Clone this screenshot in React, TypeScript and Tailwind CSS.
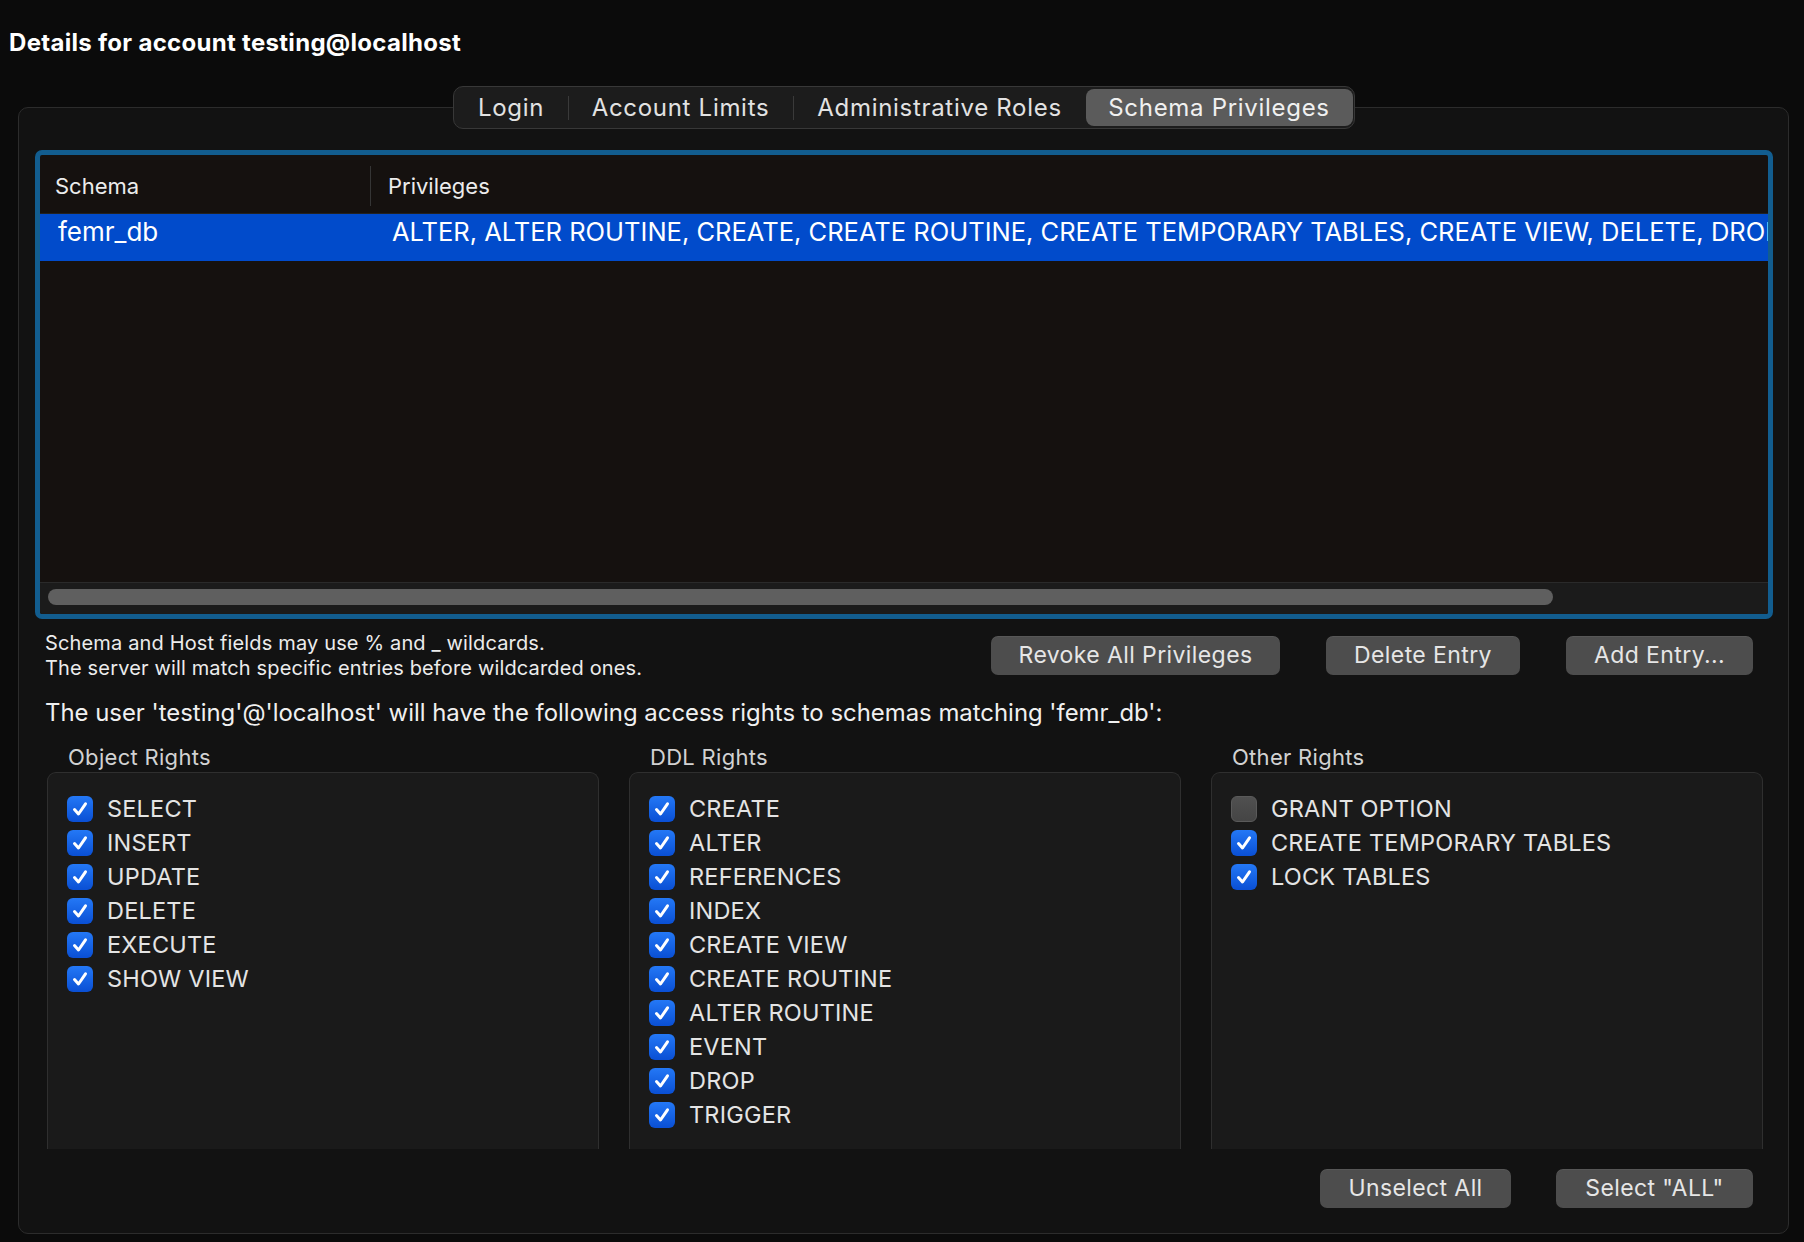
import React from "react";

const FONT = { fontFamily: "Inter, 'Noto Sans', 'Liberation Sans', sans-serif" };

function Check({ checked, label }: { checked: boolean; label: string }) {
  return (
    <div className="flex items-center h-[34px]">
      {checked ? (
        <div className="w-[26px] h-[26px] rounded-[6px] bg-gradient-to-b from-[#2478f6] to-[#0a4fd4] flex items-center justify-center">
          <svg width="18" height="18" viewBox="0 0 18 18">
            <path d="M3.5 9.5 L7.5 14 L14.5 3.8" fill="none" stroke="#ffffff" strokeWidth="3" strokeLinecap="round" strokeLinejoin="round" />
          </svg>
        </div>
      ) : (
        <div className="w-[26px] h-[26px] rounded-[6px] bg-gradient-to-b from-[#505050] to-[#454545] border border-[#5a5a5a]" />
      )}
      <span className="ml-[14px] text-[23.5px] tracking-[0.2px] leading-none text-[#e4e4e4]">{label}</span>
    </div>
  );
}

function Group({ title, items }: { title: string; items: [string, boolean][] }) {
  return (
    <div className="flex flex-col w-[552px]">
      <div className="h-[30px] pl-[21px] text-[22px] tracking-[0.3px] leading-[30px] text-[#d2d2d2]">{title}</div>
      <div className="h-[377px] rounded-t-[9px] border-t border-l border-r border-[#2f2f2f] bg-[#1a1a1a] pt-[19px] pl-[19px]">
        {items.map(([l, c]) => (
          <Check key={l} label={l} checked={c} />
        ))}
      </div>
    </div>
  );
}

function Btn({ label, w }: { label: string; w: string }) {
  return (
    <div className={`${w} h-[39px] rounded-[7px] bg-[#4d4d4d] flex items-center justify-center text-[23px] tracking-[0.4px] text-[#e6e6e6] shadow-[0_1px_0_rgba(255,255,255,0.06)_inset]`}>
      {label}
    </div>
  );
}

export default function App() {
  const privs =
    "ALTER, ALTER ROUTINE, CREATE, CREATE ROUTINE, CREATE TEMPORARY TABLES, CREATE VIEW, DELETE, DROP, EVENT, EXECUTE, INDEX, INSERT, LOCK TABLES, REFERENCES, SELECT, SHOW VIEW, TRIGGER, UPDATE";
  return (
    <div style={FONT} className="w-[1804px] h-[1242px] bg-[#0b0b0b] overflow-hidden flex flex-col">
      <div className="h-[86px] pt-[29px] pl-[9px] text-[24px] tracking-[0.3px] leading-[28px] font-bold text-white">
        Details for account testing@localhost
      </div>
      <div className="pl-[18px] pr-[15px] flex flex-col">
        <div className="relative z-10 flex justify-center">
          <div className="h-[43px] flex items-center rounded-[10px] border border-[#383838] bg-[#1c1c1c] px-[1px] text-[24px] tracking-[0.7px] text-[#e2e2e2]">
            <div className="w-[113px] h-[37px] flex items-center justify-center">Login</div>
            <div className="w-px h-[24px] bg-[#3a3a3a]" />
            <div className="w-[224px] h-[37px] flex items-center justify-center">Account Limits</div>
            <div className="w-px h-[24px] bg-[#3a3a3a]" />
            <div className="w-[292px] h-[37px] flex items-center justify-center">Administrative Roles</div>
            <div className="w-[267px] h-[37px] flex items-center justify-center rounded-[8px] bg-[#5b5b5b] text-[#f0f0f0]">
              Schema Privileges
            </div>
          </div>
        </div>
        <div className="-mt-[22px] h-[1127px] rounded-[10px] border border-[#2c2c2c] bg-[#121212] pt-[42px] pl-[16px] pr-[15px] flex flex-col">
          <div className="h-[469px] rounded-[7px] border-[5px] border-[#125d8f] bg-[#15110f] flex flex-col overflow-hidden">
            <div className="h-[58px] pt-[4px] flex items-center text-[22px] text-[#ececec] shrink-0">
              <div className="w-[330px] pl-[15px]">Schema</div>
              <div className="w-px h-[40px] bg-[#353535]" />
              <div className="pl-[17px]">Privileges</div>
            </div>
            <div className="h-px bg-[#222] shrink-0" />
            <div className="h-[47px] bg-[#014bcb] flex items-start pt-[3px] leading-[30px] text-white whitespace-nowrap overflow-hidden shrink-0">
              <div className="w-[331px] pl-[18px] shrink-0 text-[26px]">femr_db</div>
              <div className="pl-[21px] text-[25.5px]">{privs}</div>
            </div>
            <div className="flex-1" />
            <div className="h-[32px] border-t border-[#2a2a2a] bg-[#1b1b1b] pl-[8px] pt-[6px] shrink-0">
              <div className="w-[1505px] h-[16px] rounded-full bg-[#5f5f5f]" />
            </div>
          </div>
          <div className="flex mt-[16px] h-[60px]">
            <div className="-mt-[4px] pl-[10px] text-[20px] tracking-[0.15px] leading-[25px] text-[#ececec]">
              <div>Schema and Host fields may use % and _ wildcards.</div>
              <div>The server will match specific entries before wildcarded ones.</div>
            </div>
            <div className="flex-1" />
            <div className="flex gap-[46px] pr-[20px] pt-[1px]">
              <Btn label="Revoke All Privileges" w="w-[289px]" />
              <Btn label="Delete Entry" w="w-[194px]" />
              <Btn label="Add Entry..." w="w-[187px]" />
            </div>
          </div>
          <div className="pl-[10px] mt-[3px] text-[23.9px] leading-[30px] text-[#f0f0f0]">
            The user 'testing'@'localhost' will have the following access rights to schemas matching 'femr_db':
          </div>
          <div className="flex gap-[30px] pl-[12px] mt-[14px]">
            <Group
              title="Object Rights"
              items={[
                ["SELECT", true],
                ["INSERT", true],
                ["UPDATE", true],
                ["DELETE", true],
                ["EXECUTE", true],
                ["SHOW VIEW", true],
              ]}
            />
            <Group
              title="DDL Rights"
              items={[
                ["CREATE", true],
                ["ALTER", true],
                ["REFERENCES", true],
                ["INDEX", true],
                ["CREATE VIEW", true],
                ["CREATE ROUTINE", true],
                ["ALTER ROUTINE", true],
                ["EVENT", true],
                ["DROP", true],
                ["TRIGGER", true],
              ]}
            />
            <Group
              title="Other Rights"
              items={[
                ["GRANT OPTION", false],
                ["CREATE TEMPORARY TABLES", true],
                ["LOCK TABLES", true],
              ]}
            />
          </div>
          <div className="flex justify-end gap-[45px] pr-[20px] mt-[20px]">
            <Btn label="Unselect All" w="w-[191px]" />
            <Btn label={'Select "ALL"'} w="w-[197px]" />
          </div>
        </div>
      </div>
    </div>
  );
}
